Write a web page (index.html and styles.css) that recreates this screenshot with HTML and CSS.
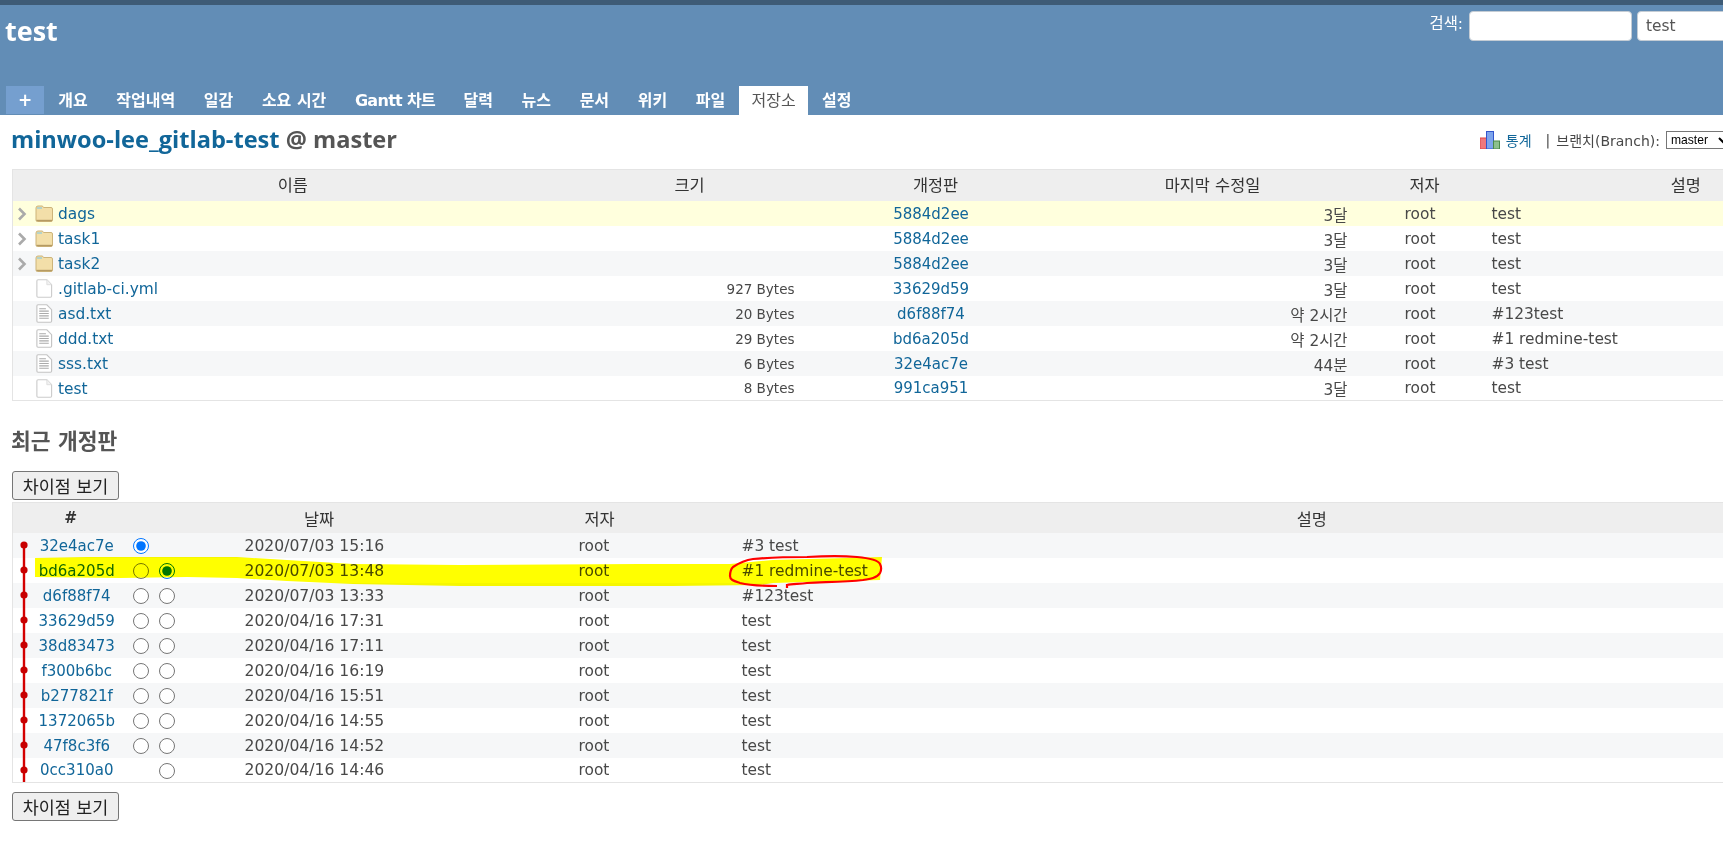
FILE: index.html

```html
<!DOCTYPE html>
<html lang="ko">
    <head>
        <meta charset="UTF-8" />
        <title>test - 저장소</title>
        <link rel="stylesheet" href="styles.css">
    </head>
    <body>
        <svg width="0" height="0" class="defs">
            <defs>
                <symbol id="i-chevron" viewBox="0 0 10 14">
                    <path d="M2 1.5 L7.5 7 L2 12.5" fill="none" stroke="#aaa" stroke-width="2.6"/>
                </symbol>
                <symbol id="i-folder" viewBox="0 0 18 17">
                    <path d="M1 3 Q1 1 3 1 L7 1 Q8 1 8.5 2.5 L16 2.5 Q17.5 2.5 17.5 4 L17.5 15 Q17.5 16.5 16 16.5 L2.5 16.5 Q1 16.5 1 15 Z" fill="#f3dfa9" stroke="#cdb47a"/>
                    <path d="M1.5 15.5 H17" stroke="#b59a63" stroke-width="1.4"/>
                    <path d="M2 3 H7" stroke="#8ccbe0" stroke-width="1.2"/>
                </symbol>
                <symbol id="i-file" viewBox="0 0 18 20">
                    <path d="M1.5 2 Q1.5 .8 2.7 .8 L12 .8 L17 6 L17 18 Q17 19.2 15.8 19.2 L2.7 19.2 Q1.5 19.2 1.5 18 Z" fill="#fff" stroke="#ccc" stroke-width="1.2"/>
                    <path d="M12 .8 V6 H17" fill="#f2f2f2" stroke="#ddd"/>
                </symbol>
                <symbol id="i-text" viewBox="0 0 18 20">
                    <path d="M1.5 2 Q1.5 .8 2.7 .8 L12 .8 L17 6 L17 18 Q17 19.2 15.8 19.2 L2.7 19.2 Q1.5 19.2 1.5 18 Z" fill="#fff" stroke="#c4c4c4" stroke-width="1.2"/>
                    <path d="M4 5 H11 M4 7.5 H14 M4 10 H14 M4 12.5 H14 M4 15 H14" stroke="#aaa" stroke-width="1.1"/>
                </symbol>
            </defs>
        </svg>

        <div class="page">
            <div class="top-line"></div>
            <div class="header">
                <div class="header-main">
                    <h1 class="project">test</h1>
                    <div class="search">
                        <label>검색:</label>
                        <input type="text" class="search-box">
                        <input type="text" class="search-box jump" value="test">
                    </div>
                </div>
                <ul class="tabs">
                    <li class="new"><a href="#">+</a></li>
                    <li><a href="#">개요</a></li>
                    <li><a href="#">작업내역</a></li>
                    <li><a href="#">일감</a></li>
                    <li><a href="#">소요 시간</a></li>
                    <li class="gantt"><a href="#">Gantt 차트</a></li>
                    <li><a href="#">달력</a></li>
                    <li><a href="#">뉴스</a></li>
                    <li><a href="#">문서</a></li>
                    <li><a href="#">위키</a></li>
                    <li><a href="#">파일</a></li>
                    <li class="selected"><a href="#">저장소</a></li>
                    <li><a href="#">설정</a></li>
                </ul>
            </div>

            <div class="content">
                <div class="title-row">
                    <h2 class="repo"><a href="#">minwoo-lee_gitlab-test</a> @ master</h2>
                    <div class="context">
                        <svg class="chart" width="20" height="18" viewBox="0 0 20 18">
                            <rect x="0" y="7" width="7" height="11" fill="#f0787c" stroke="#d44"/>
                            <rect x="6.5" y="0.5" width="7" height="17.5" fill="#7da4ec" stroke="#35c"/>
                            <rect x="13.5" y="10" width="6" height="8" fill="#8cc08c" stroke="#4a8a4a"/>
                        </svg>
                        <a href="#">통계</a>
                        <span class="sep">|</span>
                        <span>브랜치(Branch):</span>
                        <select class="branch"><option>master</option></select>
                    </div>
                </div>

                <table class="list entries">
                    <colgroup>
                        <col class="c-name"><col class="c-size"><col class="c-rev"><col class="c-age"><col class="c-author"><col class="c-comment">
                    </colgroup>
                    <thead>
                        <tr><th>이름</th><th>크기</th><th>개정판</th><th>마지막 수정일</th><th>저자</th><th>설명</th></tr>
                    </thead>
                    <tbody>
                        <tr class="hover">
                            <td class="name"><svg class="chev"><use href="#i-chevron"/></svg><svg class="ico"><use href="#i-folder"/></svg><a href="#">dags</a></td>
                            <td class="size"></td><td class="rev"><a href="#">5884d2ee</a></td><td class="age">3달</td><td class="author">root</td><td class="comment">test</td>
                        </tr>
                        <tr>
                            <td class="name"><svg class="chev"><use href="#i-chevron"/></svg><svg class="ico"><use href="#i-folder"/></svg><a href="#">task1</a></td>
                            <td class="size"></td><td class="rev"><a href="#">5884d2ee</a></td><td class="age">3달</td><td class="author">root</td><td class="comment">test</td>
                        </tr>
                        <tr class="even">
                            <td class="name"><svg class="chev"><use href="#i-chevron"/></svg><svg class="ico"><use href="#i-folder"/></svg><a href="#">task2</a></td>
                            <td class="size"></td><td class="rev"><a href="#">5884d2ee</a></td><td class="age">3달</td><td class="author">root</td><td class="comment">test</td>
                        </tr>
                        <tr>
                            <td class="name"><span class="chev"></span><svg class="ico"><use href="#i-file"/></svg><a href="#">.gitlab-ci.yml</a></td>
                            <td class="size">927 Bytes</td><td class="rev"><a href="#">33629d59</a></td><td class="age">3달</td><td class="author">root</td><td class="comment">test</td>
                        </tr>
                        <tr class="even">
                            <td class="name"><span class="chev"></span><svg class="ico"><use href="#i-text"/></svg><a href="#">asd.txt</a></td>
                            <td class="size">20 Bytes</td><td class="rev"><a href="#">d6f88f74</a></td><td class="age">약 2시간</td><td class="author">root</td><td class="comment">#123test</td>
                        </tr>
                        <tr>
                            <td class="name"><span class="chev"></span><svg class="ico"><use href="#i-text"/></svg><a href="#">ddd.txt</a></td>
                            <td class="size">29 Bytes</td><td class="rev"><a href="#">bd6a205d</a></td><td class="age">약 2시간</td><td class="author">root</td><td class="comment">#1 redmine-test</td>
                        </tr>
                        <tr class="even">
                            <td class="name"><span class="chev"></span><svg class="ico"><use href="#i-text"/></svg><a href="#">sss.txt</a></td>
                            <td class="size">6 Bytes</td><td class="rev"><a href="#">32e4ac7e</a></td><td class="age">44분</td><td class="author">root</td><td class="comment">#3 test</td>
                        </tr>
                        <tr>
                            <td class="name"><span class="chev"></span><svg class="ico"><use href="#i-file"/></svg><a href="#">test</a></td>
                            <td class="size">8 Bytes</td><td class="rev"><a href="#">991ca951</a></td><td class="age">3달</td><td class="author">root</td><td class="comment">test</td>
                        </tr>
                    </tbody>
                </table>

                <h3 class="recent">최근 개정판</h3>
                <button class="diff">차이점 보기</button>

                <div class="revs-wrap">
                    <table class="list revs">
                        <colgroup>
                            <col class="r-id"><col class="r-a"><col class="r-b"><col class="r-date"><col class="r-author"><col class="r-comment">
                        </colgroup>
                        <thead>
                            <tr><th class="hash">#</th><th></th><th></th><th>날짜</th><th>저자</th><th>설명</th></tr>
                        </thead>
                        <tbody>
                            <tr class="even"><td class="id"><a href="#">32e4ac7e</a></td><td class="radio"><input type="radio" name="rev" checked></td><td class="radio"></td><td class="date">2020/07/03 15:16</td><td class="who">root</td><td class="msg">#3 test</td></tr>
                            <tr><td class="id"><a href="#">bd6a205d</a></td><td class="radio"><input type="radio" name="rev"></td><td class="radio"><input type="radio" name="to" checked></td><td class="date">2020/07/03 13:48</td><td class="who">root</td><td class="msg">#1 redmine-test</td></tr>
                            <tr class="even"><td class="id"><a href="#">d6f88f74</a></td><td class="radio"><input type="radio" name="rev"></td><td class="radio"><input type="radio" name="to"></td><td class="date">2020/07/03 13:33</td><td class="who">root</td><td class="msg">#123test</td></tr>
                            <tr><td class="id"><a href="#">33629d59</a></td><td class="radio"><input type="radio" name="rev"></td><td class="radio"><input type="radio" name="to"></td><td class="date">2020/04/16 17:31</td><td class="who">root</td><td class="msg">test</td></tr>
                            <tr class="even"><td class="id"><a href="#">38d83473</a></td><td class="radio"><input type="radio" name="rev"></td><td class="radio"><input type="radio" name="to"></td><td class="date">2020/04/16 17:11</td><td class="who">root</td><td class="msg">test</td></tr>
                            <tr><td class="id"><a href="#">f300b6bc</a></td><td class="radio"><input type="radio" name="rev"></td><td class="radio"><input type="radio" name="to"></td><td class="date">2020/04/16 16:19</td><td class="who">root</td><td class="msg">test</td></tr>
                            <tr class="even"><td class="id"><a href="#">b277821f</a></td><td class="radio"><input type="radio" name="rev"></td><td class="radio"><input type="radio" name="to"></td><td class="date">2020/04/16 15:51</td><td class="who">root</td><td class="msg">test</td></tr>
                            <tr><td class="id"><a href="#">1372065b</a></td><td class="radio"><input type="radio" name="rev"></td><td class="radio"><input type="radio" name="to"></td><td class="date">2020/04/16 14:55</td><td class="who">root</td><td class="msg">test</td></tr>
                            <tr class="even"><td class="id"><a href="#">47f8c3f6</a></td><td class="radio"><input type="radio" name="rev"></td><td class="radio"><input type="radio" name="to"></td><td class="date">2020/04/16 14:52</td><td class="who">root</td><td class="msg">test</td></tr>
                            <tr><td class="id"><a href="#">0cc310a0</a></td><td class="radio"></td><td class="radio"><input type="radio" name="to"></td><td class="date">2020/04/16 14:46</td><td class="who">root</td><td class="msg">test</td></tr>
                        </tbody>
                    </table>
                    <!-- revision graph -->
                    <svg class="graph" width="24" height="252" viewBox="0 0 24 252">
                        <path d="M12 12 V249" stroke="#d40000" stroke-width="2.4"/>
                        <g fill="#c80000">
                            <circle cx="12" cy="12" r="3.6"/><circle cx="12" cy="37" r="3.6"/><circle cx="12" cy="62" r="3.6"/><circle cx="12" cy="87" r="3.6"/><circle cx="12" cy="112" r="3.6"/>
                            <circle cx="12" cy="137" r="3.6"/><circle cx="12" cy="162" r="3.6"/><circle cx="12" cy="187" r="3.6"/><circle cx="12" cy="212" r="3.6"/><circle cx="12" cy="237" r="3.6"/>
                        </g>
                    </svg>
                </div>

                <button class="diff lower">차이점 보기</button>
            </div>
        </div>

        <!-- hand drawn marks on top of the screenshot -->
        <svg class="marks" width="1723" height="844" viewBox="0 0 1723 844">
            <path class="marker" d="M35 558 L87 557 L237 557 L287 560 L353 564 L460 565 L640 564 L730 564 L773 560 L882 557 L880 580 L773 583 L760 585 L673 586 L460 586 L353 584 L287 581 L237 578 L187 577 L120 578 L35 577 Z"/>
            <path class="pen" d="M777 586 C760 586 748 585 740 583 C734 581 730 580 730 576 C730 571 731 569 733 567 C739 563 746 560 753 559 C775 557 790 557 807 557 C825 556 845 556 857 557 C868 558 878 560 880 564 C882 568 881 571 880 573 C877 578 870 579 863 580 C845 582 825 582 807 583 C800 584 792 584 787 585 L787 588"/>
        </svg>
    </body>
</html>
```

FILE: styles.css

```css
html, body {
    margin: 0;
    overflow: hidden;
}

body {
    font-family: "DejaVu Sans", "Noto Sans CJK KR", sans-serif;
    font-size: 15.4px;
    color: #484848;
    background: #fff;
    height: 844px;
    width: 1723px;
    position: relative;
}

a {
    color: #116699;
    text-decoration: none;
}

.defs {
    position: absolute;
}

.page {
    width: 1900px;
}

.top-line {
    height: 5px;
    background: #3e5b76;
}

.header {
    height: 110px;
    background: #628db6;
    display: flex;
    flex-direction: column;
    justify-content: space-between;
}

.header-main {
    display: flex;
    justify-content: space-between;
    align-items: flex-start;
}

.project {
    margin: 10px 0 0 5px;
    font-family: "Open Sans", sans-serif;
    font-size: 27px;
    line-height: 32px;
    font-weight: 700;
    color: #fff;
}

.search {
    display: flex;
    gap: 5px;
    margin-top: 6px;
    padding-right: 100px;
    align-items: flex-start;
    color: #fff;
    font-size: 15.4px;
}

.search label {
    margin-top: 0;
    margin-right: 1px;
}

.search-box {
    width: 163px;
    height: 30px;
    box-sizing: border-box;
    border: 1px solid #c4ccd4;
    border-radius: 4px;
    background: #fff;
    font: 15.4px "DejaVu Sans", sans-serif;
    color: #555;
    padding: 0 8px;
}

.tabs {
    display: flex;
    list-style: none;
    margin: 0;
    padding: 0 0 0 6px;
    height: 29px;
}

.tabs li a {
    display: block;
    padding: 0 14.3px;
    line-height: 29px;
    color: #fff;
    font-size: 16px;
    font-weight: 700;
    white-space: nowrap;
}

.tabs .gantt a {
    letter-spacing: -0.7px;
}

.tabs .new {
    background: #759fcf;
    height: 28px;
}

.tabs .new a {
    width: 38px;
    box-sizing: border-box;
    padding: 0;
    text-align: center;
    font-size: 17px;
    line-height: 28px;
}

.tabs .selected {
    background: #fff;
}

.tabs .selected a {
    padding: 0 12px;
    color: #555;
    font-weight: 400;
}

.title-row {
    display: flex;
    justify-content: space-between;
    align-items: center;
    height: 54px;
    padding: 0 10px 0 11px;
}

.repo {
    margin: 0 0 7px;
    font-family: "Open Sans", sans-serif;
    font-size: 23.6px;
    font-weight: 700;
    color: #555;
}

.context {
    display: flex;
    align-items: center;
    gap: 6px;
    font-size: 14px;
    margin-bottom: 5px;
    padding-right: 158px;
}

.context .sep {
    margin-left: 8px;
}

.branch {
    width: 66px;
    height: 18px;
    padding: 0;
    font: 12.1px "Liberation Sans", sans-serif;
    color: #000;
    background: #fff;
    border: 1px solid #767676;
}

.list {
    margin-left: 12px;
    width: 1872px;
    table-layout: fixed;
    border-collapse: collapse;
    border: 1px solid #e4e4e4;
}

.list th {
    height: 30px;
    box-sizing: border-box;
    padding: 1px 0 0;
    background: #eee;
    font-weight: 400;
    color: #333;
    font-size: 16.4px;
}

.entries th {
    height: 31px;
    padding: 0 0 3px;
}

.list .hash {
    font-weight: 700;
    font-size: 15.4px;
}

.list td {
    height: 25px;
    box-sizing: border-box;
    padding: 1px 0 0;
    white-space: nowrap;
}

.list tr.even td {
    background: #f6f7f8;
}

.list tr.hover td {
    background: #ffffdd;
}

.c-name { width: 560px; }
.c-size { width: 234px; }
.c-rev { width: 258px; }
.c-age { width: 296px; }
.c-author { width: 128px; }

.chev {
    display: inline-block;
    width: 10px;
    height: 14px;
    margin: 0 8px 0 4px;
    vertical-align: -2px;
}

.ico {
    width: 18px;
    height: 19px;
    margin-right: 5px;
    vertical-align: -4px;
}

.list .size {
    text-align: right;
    padding-right: 12px;
    font-size: 13.5px;
}

.list .rev {
    text-align: center;
    padding-right: 9px;
    font-size: 15px;
}

.list .age {
    text-align: right;
    padding-right: 13px;
}

.list .author {
    text-align: center;
    padding-right: 9px;
}

.list .comment {
    padding-left: 3px;
}

.recent {
    margin: 28px 0 0 11px;
    font-size: 21.5px;
    line-height: 26px;
    font-weight: 700;
    color: #555;
}

.diff {
    display: block;
    margin: 16px 0 2px 12px;
    width: 107px;
    height: 29px;
    padding: 0;
    background: #efefef;
    border: 1px solid #767676;
    border-radius: 3px;
    font: 17.4px "DejaVu Sans", "Noto Sans CJK KR", sans-serif;
    color: #222;
}

.diff.lower {
    margin-top: 9px;
}

.revs-wrap {
    position: relative;
}

.graph {
    position: absolute;
    left: 12px;
    top: 31px;
}

.r-id { width: 116px; }
.r-a { width: 25px; }
.r-b { width: 26px; }
.r-date { width: 279px; }
.r-author { width: 282px; }

.list .id {
    text-align: center;
    padding-left: 12px;
    font-size: 15px;
}

.radio {
    text-align: center;
}

.radio input {
    width: 16px;
    height: 16px;
    margin: 0;
    vertical-align: middle;
}

.list .date {
    padding-left: 65px;
    font-size: 15.6px;
}

.list .who {
    padding-left: 120px;
}

.list .msg {
    padding-left: 1px;
}

.marks {
    position: absolute;
    left: 0;
    top: 0;
    pointer-events: none;
}

.marker {
    fill: #ffff00;
    mix-blend-mode: multiply;
}

.pen {
    fill: none;
    stroke: #f00;
    stroke-width: 2.2;
}
```
